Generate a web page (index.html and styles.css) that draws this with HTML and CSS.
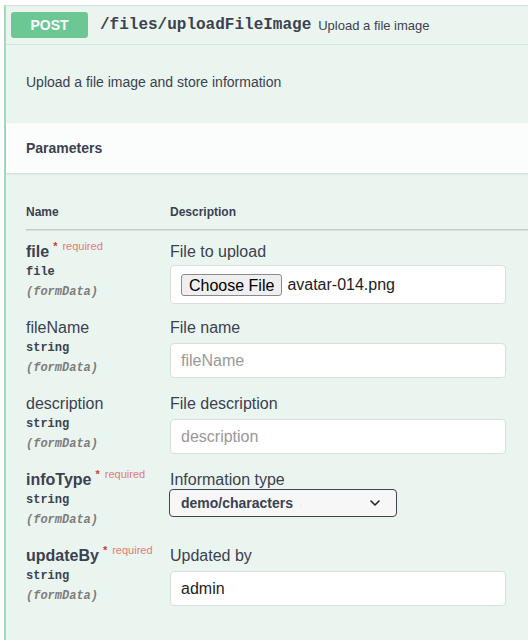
FILE: index.html
```html
<!DOCTYPE html>
<html lang="en">
<head>
<meta charset="utf-8">
<title>POST /files/uploadFileImage</title>
<link rel="stylesheet" href="styles.css">
</head>
<body>
<div class="opblock">
  <div class="summary">
    <span class="method">POST</span>
    <span class="path">/files/uploadFileImage</span>
    <span class="summary-text">Upload a file image</span>
  </div>
  <div class="desc">Upload a file image and store information</div>
  <div class="section-header">Parameters</div>
  <div class="params">
    <div class="thead">
      <div class="col-name">Name</div>
      <div class="col-desc">Description</div>
    </div>

    <div class="row first">
      <div class="col-name">
        <div class="pname required">file<span class="star">*</span><span class="req">required</span></div>
        <div class="ptype">file</div>
        <div class="pin">(formData)</div>
      </div>
      <div class="col-desc">
        <div class="plabel">File to upload</div>
        <div class="field tall"><span class="choose">Choose File</span><span class="fname">avatar-014.png</span></div>
      </div>
    </div>

    <div class="row">
      <div class="col-name">
        <div class="pname">fileName</div>
        <div class="ptype">string</div>
        <div class="pin">(formData)</div>
      </div>
      <div class="col-desc">
        <div class="plabel">File name</div>
        <div class="field"><span class="ph">fileName</span></div>
      </div>
    </div>

    <div class="row">
      <div class="col-name">
        <div class="pname">description</div>
        <div class="ptype">string</div>
        <div class="pin">(formData)</div>
      </div>
      <div class="col-desc">
        <div class="plabel">File description</div>
        <div class="field"><span class="ph">description</span></div>
      </div>
    </div>

    <div class="row">
      <div class="col-name">
        <div class="pname required">infoType<span class="star">*</span><span class="req">required</span></div>
        <div class="ptype">string</div>
        <div class="pin">(formData)</div>
      </div>
      <div class="col-desc">
        <div class="plabel tight">Information type</div>
        <div class="select"><span>demo/characters</span>
          <svg class="chev" width="10" height="6" viewBox="0 0 10 6"><path d="M1 1 L5 5 L9 1" fill="none" stroke="#222" stroke-width="1.6" stroke-linecap="round" stroke-linejoin="round"/></svg>
        </div>
      </div>
    </div>

    <div class="row">
      <div class="col-name">
        <div class="pname required">updateBy<span class="star">*</span><span class="req">required</span></div>
        <div class="ptype">string</div>
        <div class="pin">(formData)</div>
      </div>
      <div class="col-desc">
        <div class="plabel">Updated by</div>
        <div class="field"><span class="val">admin</span></div>
      </div>
    </div>
  </div>
</div>
</body>
</html>
```

FILE: styles.css
```css
html, body {
  margin: 0;
  padding: 0;
  background: #ffffff;
  overflow: hidden;
}
body {
  font-family: "Liberation Sans", Arial, sans-serif;
  color: #3b4151;
  width: 528px;
  height: 640px;
}
.opblock {
  margin: 5px 0 0 4px;
  width: 522px;
  border-top: 1px solid #cfe3d8;
  border-left: 2px solid #a3dabb;
  background: #ebf5ef;
  min-height: 640px;
}
.summary {
  display: flex;
  align-items: center;
  padding: 6px 5px;
  border-bottom: 1px solid #cfe6da;
}
.method {
  width: 77px;
  height: 26px;
  line-height: 26px;
  text-align: center;
  background: #6cc795;
  color: #fff;
  font-weight: bold;
  font-size: 14px;
  border-radius: 3px;
  flex: none;
}
.path {
  font-family: "Liberation Mono", "Courier New", monospace;
  font-weight: bold;
  font-size: 16px;
  color: #3b4151;
  margin-left: 12px;
  white-space: nowrap;
}
.summary-text {
  font-size: 13px;
  margin-left: 7px;
  color: #3b4151;
  white-space: nowrap;
}
.desc {
  font-size: 14px;
  padding: 29px 20px 0 20px;
  height: 49px;
}
.section-header {
  background: #fbfdfc;
  height: 50px;
  line-height: 50px;
  padding-left: 20px;
  font-weight: bold;
  font-size: 14px;
  box-shadow: 0 1px 2px rgba(0, 0, 0, 0.12);
}
.params {
  padding: 0 0 0 20px;
}
.thead {
  display: flex;
  padding-top: 32px;
  height: 24px;
  font-size: 12px;
  font-weight: bold;
  border-bottom: 1px solid #c2cbc6;
  box-shadow: 0 1px 0 #d9e2dd;
}
.col-name {
  width: 144px;
  flex: none;
}
.col-desc {
  width: 336px;
  flex: none;
}
.row {
  display: flex;
  padding: 8px 0 8px 0;
}
.row.first {
  padding-top: 12px;
  padding-bottom: 6px;
}
.row.first .plabel {
  margin-bottom: 3px;
}
.pname {
  font-size: 16px;
  line-height: 20px;
  height: 20px;
  color: #3b4151;
  white-space: nowrap;
}
.pname.required {
  font-weight: bold;
}
.star {
  color: #d03b3b;
  font-size: 11px;
  position: relative;
  top: -7px;
  padding-left: 4px;
}
.req {
  color: #e07a7a;
  font-size: 11px;
  font-weight: normal;
  position: relative;
  top: -7px;
  padding-left: 5px;
}
.ptype {
  font-family: "Liberation Mono", "Courier New", monospace;
  font-weight: bold;
  font-size: 12px;
  line-height: 20px;
}
.pin {
  font-family: "Liberation Mono", "Courier New", monospace;
  font-style: italic;
  font-weight: bold;
  font-size: 12px;
  line-height: 20px;
  color: #7d7d7d;
}
.plabel {
  font-size: 16px;
  line-height: 20px;
  margin-bottom: 5px;
}
.plabel.tight {
  margin-bottom: -1px;
}
.field {
  box-sizing: border-box;
  height: 35px;
  border: 1px solid #d9dedb;
  border-radius: 4px;
  background: #fff;
  display: flex;
  align-items: center;
  padding-left: 10px;
  font-size: 16px;
}
.field.tall {
  height: 39px;
}
.choose {
  display: inline-block;
  background: #efefef;
  border: 1px solid #8a8a8a;
  border-radius: 3px;
  padding: 0 7px;
  height: 22px;
  line-height: 21px;
  font-size: 16px;
  color: #000;
  box-sizing: border-box;
}
.fname {
  margin-left: 5px;
  color: #222;
}
.ph {
  color: #999;
}
.val {
  color: #222;
}
.select {
  box-sizing: border-box;
  width: 228px;
  height: 28px;
  margin-left: -1px;
  border: 1px solid #41444e;
  border-radius: 4px;
  background: #f7f7f7;
  display: flex;
  align-items: center;
  justify-content: space-between;
  padding: 0 16px 0 11px;
  font-size: 14px;
  font-weight: bold;
  color: #3b4151;
}
.chev {
  display: block;
}
```
